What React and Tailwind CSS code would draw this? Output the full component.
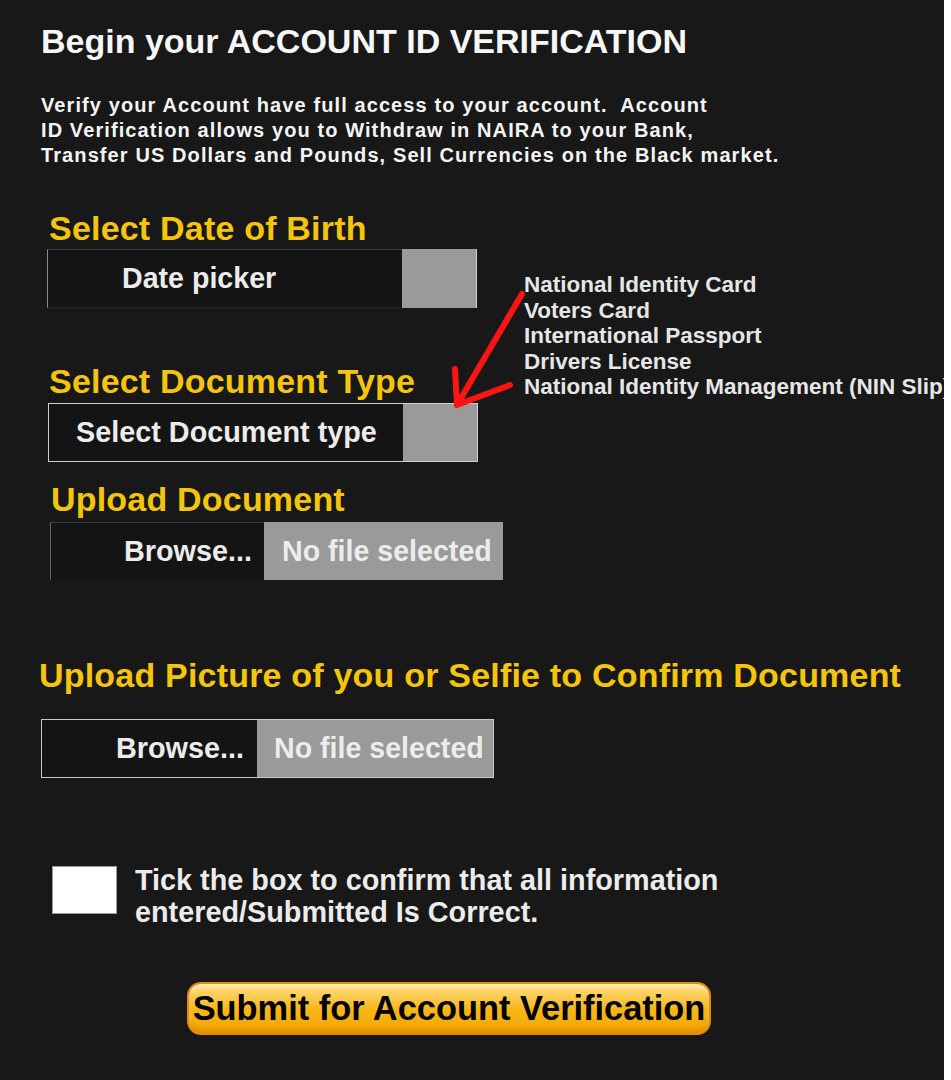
import React from "react";

export default function App() {
  return (
    <div className="flex w-[951px] h-[1080px] bg-white font-['Liberation_Sans',Arial,sans-serif] font-bold">
      <div className="relative w-[944px] h-[1080px] shrink-0 bg-[#181818] overflow-hidden">
        <div className="flex flex-col pt-[22px]">
          <h1 className="ml-[41px] text-[34px] leading-[38px] text-[#f7f7f7] whitespace-nowrap">
            Begin your ACCOUNT ID VERIFICATION
          </h1>
          <p className="ml-[41px] mt-[33px] text-[20px] leading-[25px] tracking-[1.1px] text-[#f4f4f4] whitespace-nowrap">
            Verify your Account have full access to your account.&nbsp; Account
            <br />
            ID Verification allows you to Withdraw in NAIRA to your Bank,
            <br />
            Transfer US Dollars and Pounds, Sell Currencies on the Black market.
          </p>

          <h2 className="ml-[49px] mt-[41px] text-[34px] leading-[38px] tracking-[0.2px] text-[#f5c40c] whitespace-nowrap">
            Select Date of Birth
          </h2>
          <div className="ml-[47px] mt-[2px] flex w-[430px] h-[59px]">
            <div className="flex-1 flex items-center pl-[74px] bg-[#141414] border-l border-l-[#8a8a8a] border-t border-t-[#3a3a3a] border-b border-b-[#262626] text-[28.6px] text-[#ececec]">
              Date picker
            </div>
            <div className="w-[75px] bg-[#9a9a9a] border-r border-r-[#cfcfcf]" />
          </div>

          <h2 className="ml-[49px] mt-[54px] text-[34px] leading-[38px] tracking-[0.2px] text-[#f5c40c] whitespace-nowrap">
            Select Document Type
          </h2>
          <div className="ml-[48px] mt-[3px] flex w-[430px] h-[59px] border border-[#cfcfcf]">
            <div className="flex-1 flex items-center pl-[27px] bg-[#141414] text-[28.8px] text-[#ececec] whitespace-nowrap">
              Select Document type
            </div>
            <div className="w-[74px] bg-[#9a9a9a]" />
          </div>

          <h2 className="ml-[51px] mt-[18px] text-[34px] leading-[38px] tracking-[0.2px] text-[#f5c40c] whitespace-nowrap">
            Upload Document
          </h2>
          <div className="ml-[50px] mt-[4px] flex w-[453px] h-[58px]">
            <div className="w-[214px] flex items-center justify-end pr-[12px] bg-[#141414] border-l border-l-[#666] border-t border-t-[#3a3a3a] text-[28.8px] text-[#ececec]">
              Browse...
            </div>
            <div className="flex-1 flex items-center pl-[18px] bg-[#9a9a9a] text-[28.6px] text-[#ececec] whitespace-nowrap">
              No file selected
            </div>
          </div>

          <h2 className="ml-[39px] mt-[76px] text-[34px] leading-[38px] tracking-[0.2px] text-[#f5c40c] whitespace-nowrap">
            Upload Picture of you or Selfie to Confirm Document
          </h2>
          <div className="ml-[41px] mt-[25px] flex w-[453px] h-[59px] border border-[#c8c8c8]">
            <div className="w-[215px] flex items-center justify-end pr-[13px] bg-[#141414] text-[28.8px] text-[#ececec]">
              Browse...
            </div>
            <div className="flex-1 flex items-center pl-[17px] bg-[#9a9a9a] text-[28.6px] text-[#ececec] whitespace-nowrap">
              No file selected
            </div>
          </div>

          <div className="ml-[52px] mt-[86px] flex items-start">
            <div className="mt-[2px] w-[65px] h-[48px] bg-white border border-[#9a9a9a] shrink-0" />
            <p className="ml-[18px] text-[28.8px] leading-[32px] text-[#ececec] whitespace-nowrap">
              Tick the box to confirm that all information
              <br />
              entered/Submitted Is Correct.
            </p>
          </div>

          <div className="ml-[187px] mt-[54px] w-[524px] h-[53px] flex items-center justify-center rounded-[14px] border-2 border-[#e48b00] bg-gradient-to-b from-[#ffe07a] via-[#f8b816] to-[#f2a400] shadow-[inset_0_3px_4px_rgba(255,255,255,0.55),inset_0_-3px_4px_rgba(214,120,0,0.6)]">
            <span className="text-[34.4px] leading-none text-black whitespace-nowrap">
              Submit for Account Verification
            </span>
          </div>
        </div>

        <div className="absolute left-[524px] top-[272px] text-[22.5px] leading-[25.5px] text-[#e6e6e6] whitespace-nowrap">
          <div>National Identity Card</div>
          <div>Voters Card</div>
          <div>International Passport</div>
          <div>Drivers License</div>
          <div>National Identity Management (NIN Slip)</div>
        </div>

        <svg
          className="absolute left-0 top-0 pointer-events-none"
          width="944"
          height="1080"
          viewBox="0 0 944 1080"
        >
          <path
            d="M522 294 L457 405 M455 369 L457 405 L510 385"
            fill="none"
            stroke="#ff1414"
            strokeWidth="6"
            strokeLinecap="round"
            strokeLinejoin="round"
          />
        </svg>
      </div>
    </div>
  );
}
